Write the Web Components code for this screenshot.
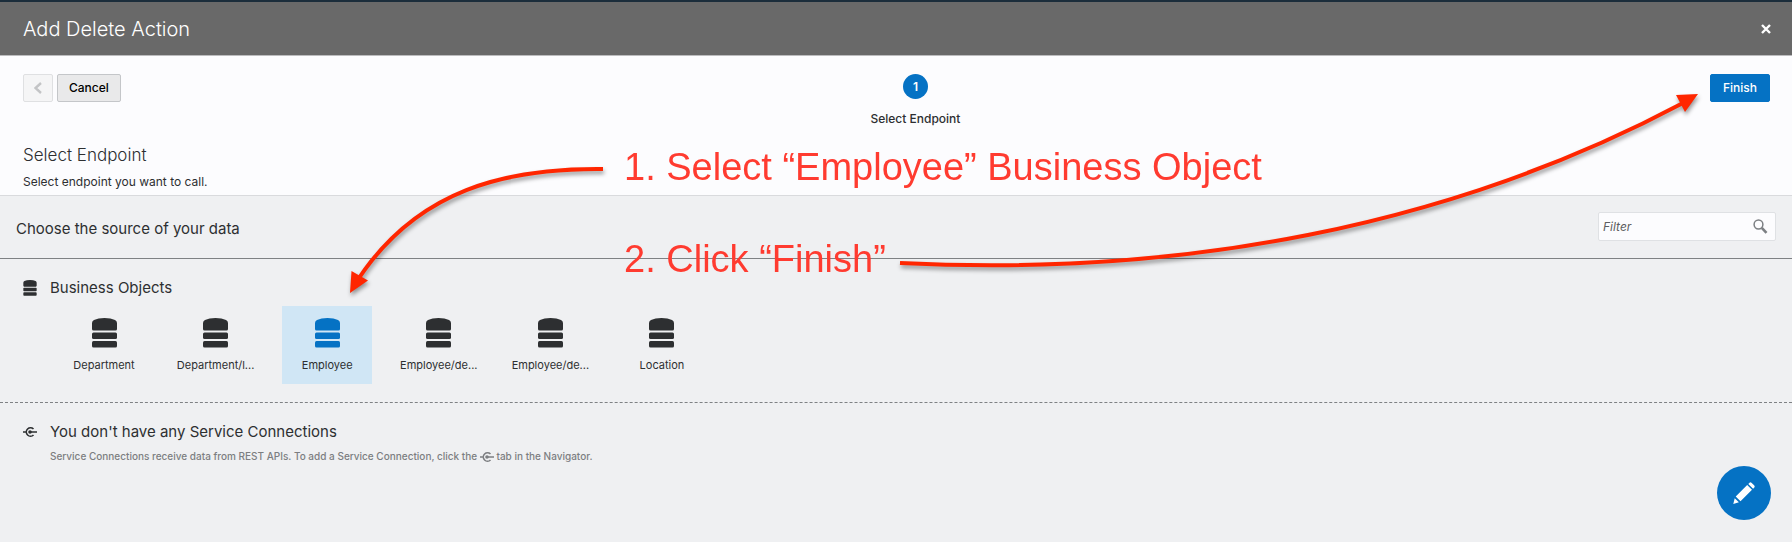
<!DOCTYPE html>
<html lang="en">
<head>
<meta charset="utf-8">
<title>Add Delete Action</title>
<style>
html,body{margin:0;min-height:100%;background:#eff0f2}
body{font-family:Inter,"Liberation Sans",sans-serif;color:#2d2f31}
</style>
</head>
<body>
<action-wizard></action-wizard>
<script>
function define(name, markup, setup) {
  const template = document.createElement('template');
  template.innerHTML = markup;
  customElements.define(name, class extends HTMLElement {
    constructor() {
      super();
      this.attachShadow({ mode: 'open' }).append(template.content.cloneNode(true));
      if (setup) setup(this.shadowRoot, this);
    }
  });
}

define('db-icon', `
<style>:host{display:block;width:25px;height:30px}svg{display:block;width:100%;height:100%}</style>
<svg viewBox="0 0 25 30" fill="currentColor" aria-hidden="true">
  <path d="M0 11V5Q0 3 2 2Q6 0 12.500 0T23 2Q25 3 25 5V11Q25 12.500 23.500 12.500H1.500Q0 12.500 0 11Z"/>
  <rect y="14.500" width="25" height="6.500" rx="1.500"/><rect y="23" width="25" height="6.500" rx="1.500"/>
</svg>`);

define('connection-icon', `
<style>:host{display:block;width:14px;height:12px}svg{display:block;width:100%;height:100%}</style>
<svg viewBox="0 0 14 12" fill="none" stroke="currentColor" stroke-width="1.600" aria-hidden="true">
  <path d="M10.500 3A4.200 4.200 0 1 0 10.500 9M0 6H3M7 6H14"/><circle cx="7" cy="6" r="1.800" fill="currentColor" stroke="none"/>
</svg>`);

define('app-strip', `
<style>:host{display:block;height:2px;background:#1b2d3b}</style>`);

define('dialog-header', `
<style>
:host{display:flex;align-items:center;justify-content:space-between;box-sizing:border-box;height:54px;padding:0 20px 0 23px;background:#696969;border-bottom:1px solid #bcbcbe;color:#fff}
h1{margin:0;font-size:20px;line-height:24px;font-weight:300}
button{display:flex;padding:0;border:0;background:none;color:inherit;width:12px}
svg{width:10px;height:10px;margin:auto}
</style>
<h1><slot></slot></h1>
<button aria-label="Close"><svg viewBox="0 0 10 10" stroke="currentColor" stroke-width="2.400"><path d="M1 1L9 9M9 1L1 9"/></svg></button>`);

define('wizard-button', `
<style>
:host{display:block}
button{box-sizing:border-box;display:flex;align-items:center;justify-content:center;height:28px;padding:0 11px;border:1px solid #c4c6c9;border-radius:2px;background:#e9e9ea;color:#000;font:500 12px/16px Inter,"Liberation Sans",sans-serif}
:host([kind=primary]) button{background:#0572c4;border-color:#0572c4;color:#fff;width:60px;padding:0}
:host([kind=back]) button{width:30px;padding:0;background:#f5f5f6;border-color:#dfe0e2;color:#c3c4c6}
</style>
<button><slot></slot></button>`, (root, host) => {
  if (host.getAttribute('kind') === 'back') {
    root.querySelector('button').disabled = true;
    root.querySelector('button').setAttribute('aria-label', 'Back');
  }
});

define('wizard-step', `
<style>
:host{display:flex;flex-direction:column;align-items:center;gap:12px;font-size:12px;line-height:16px;font-weight:500}
b{width:25px;height:25px;border-radius:50%;background:#0572c4;color:#fff;text-align:center;font-size:12px;line-height:25px;font-weight:600}
</style>
<b>1</b><span><slot></slot></span>`);

define('wizard-top', `
<style>
:host{display:block;background:#fcfcfe;border-bottom:1px solid #d9dadd;padding:18px 22px 4px 23px}
.bar{display:flex;align-items:flex-start;gap:4px;height:69px}
wizard-step{flex:1}
h2{margin:0;font-size:17px;line-height:24px;font-weight:300}
p{margin:5px 0 0;font-size:12px;line-height:19px}
svg{width:8px;height:12px}
</style>
<div class="bar">
  <wizard-button kind="back"><svg viewBox="0 0 8 12" fill="none" stroke="currentColor" stroke-width="2.400" aria-hidden="true"><path d="M7 1L1.500 6L7 11"/></svg></wizard-button>
  <wizard-button>Cancel</wizard-button>
  <wizard-step>Select Endpoint</wizard-step>
  <wizard-button kind="primary">Finish</wizard-button>
</div>
<h2>Select Endpoint</h2>
<p>Select endpoint you want to call.</p>`);

define('filter-bar', `
<style>
:host{display:flex;align-items:flex-start;justify-content:space-between;box-sizing:border-box;height:63px;padding:16px 16px 0 16px;border-bottom:1px solid #7e8184}
h3{margin:5px 0 0;font-size:15px;line-height:24px;font-weight:400}
label{display:flex;align-items:center;box-sizing:border-box;width:178px;height:29px;padding:0 7px 0 4px;background:#fcfcfe;border:1px solid #dfe1e4;border-radius:2px;color:#7c7f83}
input{flex:1;min-width:0;padding:0;border:0;background:none;outline:0;font:italic 12px/16px Inter,"Liberation Sans",sans-serif}
input::placeholder{color:#5c5e61;opacity:1}
svg{width:15px;height:16px}
</style>
<h3>Choose the source of your data</h3>
<label><input type="text" placeholder="Filter" aria-label="Filter"><svg viewBox="0 0 15 16" fill="none" stroke="currentColor" aria-hidden="true"><circle cx="5.500" cy="5.500" r="4.400" stroke-width="1.500"/><path d="M8.800 8.800L13.500 13.800" stroke-width="2.600"/></svg></label>`);

define('object-tile', `
<style>
:host{display:block;width:90px}
button{display:flex;flex-direction:column;align-items:center;gap:9px;width:100%;height:78px;padding:12px 0 0;border:0;background:none;color:#2d2f31;font:400 11px/16px Inter,"Liberation Sans",sans-serif;white-space:nowrap}
:host([selected]) button{background:#d0e6f5}
:host([selected]) db-icon{color:#0572c4}
</style>
<button><db-icon></db-icon><span><slot></slot></span></button>`);

define('business-objects', `
<style>
:host{display:block;box-sizing:border-box;height:144px;padding:17px 23px 0;border-bottom:1px dashed #7e8184}
header{display:flex;align-items:center;gap:13px}
header db-icon{width:14px;height:16px}
h3{margin:0;font-size:15px;line-height:24px;font-weight:400}
div{display:flex;justify-content:space-between;max-width:648px;margin:6px 0 0 36px}
</style>
<header><db-icon></db-icon><h3>Business Objects</h3></header>
<div>
  <object-tile>Department</object-tile><object-tile>Department/l...</object-tile><object-tile selected>Employee</object-tile>
  <object-tile>Employee/de...</object-tile><object-tile>Employee/de...</object-tile><object-tile>Location</object-tile>
</div>`);

define('service-connections', `
<style>
:host{display:block;padding:17px 23px 24px}
header{display:flex;align-items:center;gap:13px}
h3{margin:0;font-size:15px;line-height:24px;font-weight:400}
p{margin:4px 0 0 27px;font-size:10px;line-height:16px;font-weight:500;color:#7c7e81}
p connection-icon{display:inline-block;vertical-align:-3px}
</style>
<header><connection-icon></connection-icon><h3>You don't have any Service Connections</h3></header>
<p>Service Connections receive data from REST APIs. To add a Service Connection, click the <connection-icon></connection-icon> tab in the Navigator.</p>`);

define('edit-fab', `
<style>
:host{position:fixed;right:21px;bottom:22px}
button{display:flex;align-items:center;justify-content:center;width:54px;height:54px;padding:0;border:0;border-radius:50%;background:#0572c4;color:#fff}
svg{width:22px;height:22px}
</style>
<button aria-label="Edit"><svg viewBox="0 0 22 22" fill="currentColor" aria-hidden="true"><path d="M14.200 3L19 7.800L7.500 19.300L2.700 14.500ZM15.300 1.900L16.500.700Q17.500-.200 18.700.900L21.100 3.300Q22.200 4.500 21.300 5.500L20.100 6.700ZM1.700 16.200L5.900 20.300L.300 22Z"/></svg></button>`);

define('tutorial-notes', `
<style>
:host{position:absolute;inset:0;pointer-events:none;color:#ff3b30;font:38px/44px "Liberation Sans",Arial,sans-serif;white-space:nowrap}
svg{position:absolute;left:0;top:0;width:100%;height:auto;overflow:visible;filter:drop-shadow(1px 3px 2px rgba(0,0,0,.4))}
p{position:absolute;margin:0}
.one{left:624px;top:145px}.two{left:624px;top:237px}
</style>
<svg viewBox="0 0 1792 542" fill="none" stroke="#ff2600" stroke-width="4" aria-hidden="true">
  <path d="M603 169C505 168 418 190 359 278M900 263C1180 277 1450 227 1683 103"/>
  <path d="M350 293L351.500 271L368 280.500ZM1698 94L1676 95L1685 112Z" fill="#ff2600" stroke="none"/>
</svg>
<p class="one">1. Select “Employee” Business Object</p>
<p class="two">2. Click “Finish”</p>`);

define('action-wizard', `
<style>:host{display:block;position:relative}</style>
<app-strip></app-strip>
<dialog-header>Add Delete Action</dialog-header>
<wizard-top></wizard-top>
<filter-bar></filter-bar>
<business-objects></business-objects>
<service-connections></service-connections>
<edit-fab></edit-fab>
<tutorial-notes></tutorial-notes>`);
</script>
</body>
</html>
